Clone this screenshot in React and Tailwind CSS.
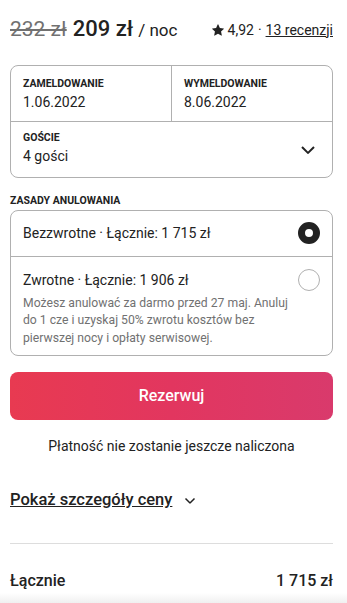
import React from "react";

const Chevron = ({ className }) => (
  <svg viewBox="0 0 32 32" className={className} fill="none" stroke="currentColor" strokeWidth="4">
    <path d="M28 12L16.7 23.3a1 1 0 0 1-1.4 0L4 12" />
  </svg>
);

const Star = () => (
  <svg viewBox="0 0 32 32" className="w-[12px] h-[12px] fill-[#222222]">
    <path d="M15.1 1.58l-4.13 8.88-9.86 1.27a1 1 0 0 0-.54 1.74l7.3 6.57-1.97 9.85a1 1 0 0 0 1.48 1.06l8.62-5 8.63 5a1 1 0 0 0 1.48-1.06l-1.97-9.85 7.3-6.57a1 1 0 0 0-.55-1.73l-9.86-1.28-4.12-8.88a1 1 0 0 0-1.82 0z" />
  </svg>
);

const App = () => {
  return (
    <div className="w-[347px] h-[603px] overflow-hidden bg-white text-[#222222] font-['Roboto',sans-serif] flex flex-col">
      <div className="pl-[10px] pr-[14px] flex flex-col">
        {/* price */}
        <div className="flex items-baseline justify-between mt-[12px]">
          <div className="flex items-baseline">
            <span className="text-[21px] text-[#717171] line-through">232 zł</span>
            <span className="text-[22px] font-medium ml-[6px]">209 zł</span>
            <span className="text-[17px] ml-[5px]">/ noc</span>
          </div>
          <div className="flex items-center text-[14px] gap-[4px]">
            <Star />
            <span>4,92</span>
            <span>·</span>
            <span className="underline">13 recenzji</span>
          </div>
        </div>

        {/* dates & guests */}
        <div className="mt-[19px] border border-[#b0b0b0] rounded-[8px] flex flex-col">
          <div className="flex border-b border-[#b0b0b0] h-[56px]">
            <div className="flex-1 pl-[12px] pt-[12px] border-r border-[#b0b0b0]">
              <div className="text-[10.5px] font-bold leading-[12px]">ZAMELDOWANIE</div>
              <div className="text-[14px] leading-[20px] mt-[2px]">1.06.2022</div>
            </div>
            <div className="flex-1 pl-[12px] pt-[12px]">
              <div className="text-[10.5px] font-bold leading-[12px]">WYMELDOWANIE</div>
              <div className="text-[14px] leading-[20px] mt-[2px]">8.06.2022</div>
            </div>
          </div>
          <div className="flex items-center justify-between h-[55px] pl-[12px] pr-[16px]">
            <div>
              <div className="text-[10.5px] font-bold leading-[12px]">GOŚCIE</div>
              <div className="text-[14px] leading-[20px] mt-[2px]">4 gości</div>
            </div>
            <Chevron className="w-[16px] h-[16px]" />
          </div>
        </div>

        {/* cancellation */}
        <div className="mt-[17px] text-[10.5px] font-bold leading-[12px]">ZASADY ANULOWANIA</div>
        <div className="mt-[3px] border border-[#b0b0b0] rounded-[8px] flex flex-col">
          <div className="flex items-center justify-between h-[46px] pl-[12px] pr-[12px] border-b border-[#b0b0b0]">
            <span className="text-[14px]">Bezzwrotne · Łącznie: 1 715 zł</span>
            <span className="w-[22px] h-[22px] rounded-full border-[7px] border-[#222222] bg-white" />
          </div>
          <div className="flex justify-between gap-[6px] pl-[12px] pr-[12px] pt-[12px] pb-[8px]">
            <div className="flex flex-col">
              <span className="text-[14px] leading-[22px]">Zwrotne · Łącznie: 1 906 zł</span>
              <span className="text-[12.2px] leading-[17.5px] text-[#717171] mt-[4px]">
                Możesz anulować za darmo przed 27 maj. Anuluj do 1 cze i uzyskaj 50% zwrotu kosztów bez pierwszej nocy i opłaty serwisowej.
              </span>
            </div>
            <span className="shrink-0 w-[22px] h-[22px] rounded-full border border-[#b0b0b0] bg-white" />
          </div>
        </div>

        {/* button */}
        <button className="mt-[16px] h-[48px] rounded-[8px] bg-[linear-gradient(to_right,#e83a51,#e2365f_50%,#d93a6c)] text-white text-[16px] font-medium">
          Rezerwuj
        </button>
        <div className="mt-[16px] text-center text-[14px]">Płatność nie zostanie jeszcze naliczona</div>

        {/* price details */}
        <div className="mt-[31px] flex items-center gap-[12px]">
          <span className="text-[16.5px] font-medium underline">Pokaż szczegóły ceny</span>
          <Chevron className="w-[12px] h-[12px]" />
        </div>

        <div className="mt-[30px] border-t border-[#dddddd]" />
        <div className="mt-[25px] flex justify-between text-[16px] font-medium leading-[24px]">
          <span>Łącznie</span>
          <span>1 715 zł</span>
        </div>
      </div>
      <div className="mt-auto h-[13px] bg-[linear-gradient(to_bottom,#ffffff,#f0f0f0)]" />
    </div>
  );
};

export default App;
